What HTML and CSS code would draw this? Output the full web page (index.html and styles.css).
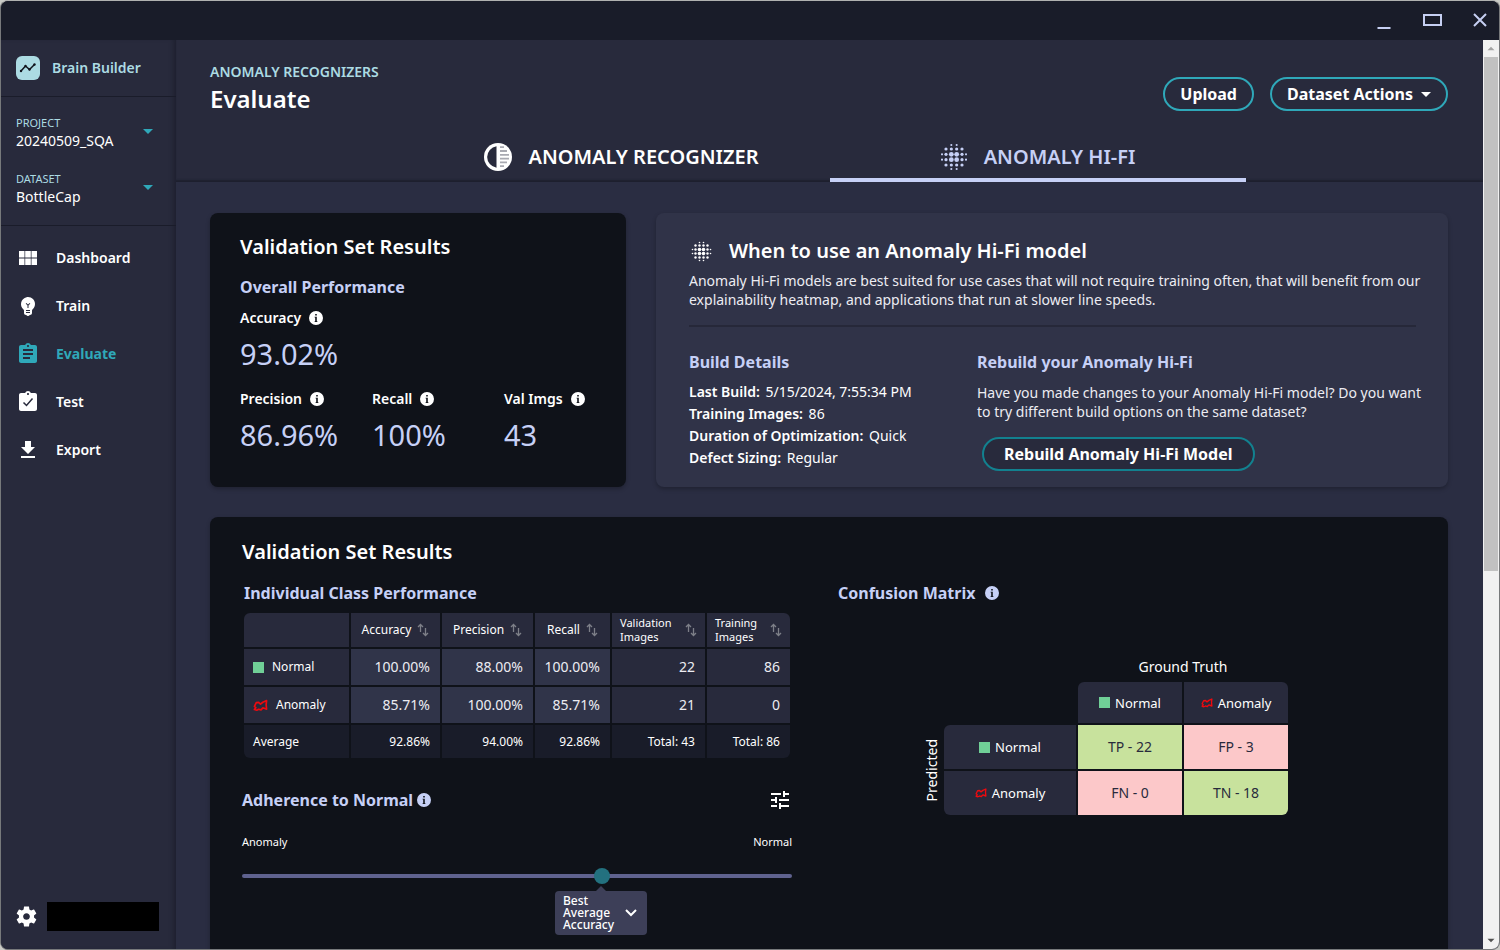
FILE: index.html
```html
<!DOCTYPE html>
<html lang="en">
<head>
  <meta charset="UTF-8" />
  <meta name="viewport" content="width=device-width, initial-scale=1" />
  <title>Brain Builder - Evaluate</title>
  <link rel="stylesheet" href="styles.css">
</head>
<body>
  <!-- Icon sprite -->
  <svg class="sprite" aria-hidden="true">
    <symbol id="i-blur" viewBox="1.5 1.5 21 21">
      <circle cx="10" cy="10" r="1.8"/><circle cx="14" cy="10" r="1.8"/><circle cx="10" cy="14" r="1.8"/><circle cx="14" cy="14" r="1.8"/>
      <circle cx="6" cy="6" r="1.2"/><circle cx="10" cy="6" r="1.2"/><circle cx="14" cy="6" r="1.2"/><circle cx="18" cy="6" r="1.2"/>
      <circle cx="6" cy="10" r="1.2"/><circle cx="18" cy="10" r="1.2"/><circle cx="6" cy="14" r="1.2"/><circle cx="18" cy="14" r="1.2"/>
      <circle cx="6" cy="18" r="1.2"/><circle cx="10" cy="18" r="1.2"/><circle cx="14" cy="18" r="1.2"/><circle cx="18" cy="18" r="1.2"/>
      <circle cx="10" cy="3" r=".8"/><circle cx="14" cy="3" r=".8"/><circle cx="10" cy="21" r=".8"/><circle cx="14" cy="21" r=".8"/>
      <circle cx="3" cy="10" r=".8"/><circle cx="3" cy="14" r=".8"/><circle cx="21" cy="10" r=".8"/><circle cx="21" cy="14" r=".8"/>
    </symbol>
    <symbol id="i-info" viewBox="0 0 14 14">
      <path fill-rule="evenodd" d="M7 0a7 7 0 1 0 0 14A7 7 0 0 0 7 0zM6.200 3h1.600v1.500H6.200zM5.600 5.700h2.200v4.500h.6v.8H5.600v-.8h.6V6.500h-.6z"/>
    </symbol>
    <symbol id="i-sort" viewBox="0 0 12 14">
      <path d="M3.500 9V1.500M1 4l2.500-2.500L6 4M8.500 5v7.500M6 10l2.500 2.500L11 10" fill="none" stroke="currentColor" stroke-width="1.300"/>
    </symbol>
    <symbol id="i-blob" viewBox="0 0 16 13">
      <path d="M1.500 7.500 3.500 3.500 6 3.200 8 5l2.500-2 4-1.800-.5 4.300.5 5-2.500-1-1.500-.5-2 2.200-2.500-.7-2 1-2.500-.7 1.500-2z" fill="none" stroke="currentColor" stroke-width="1.800" stroke-linejoin="round"/>
    </symbol>
    <symbol id="i-caret" viewBox="0 0 10 5"><path d="M0 0h10L5 5z"/></symbol>
  </svg>

  <div class="window">
    <div class="titlebar">
      <button aria-label="Minimize"><svg viewBox="0 0 24 24"><path d="M5.500 19h13"/></svg></button>
      <button aria-label="Maximize"><svg viewBox="0 0 24 24"><path d="M4 6h17v10H4z"/></svg></button>
      <button aria-label="Close"><svg viewBox="0 0 24 24"><path d="M6 5l12 12M18 5L6 17"/></svg></button>
    </div>

    <div class="app">
      <aside class="sidebar">
        <div class="brand">
          <svg class="logo" viewBox="0 0 24 24">
            <rect width="24" height="24" rx="6" fill="#acdbe3"/>
            <path d="M5 15l4.500-5 4 3.500L18.500 8.500" fill="none" stroke="#10131c" stroke-width="1.500"/>
            <g fill="#10131c"><circle cx="5" cy="15" r="1.200"/><circle cx="9.500" cy="10" r="1.200"/><circle cx="13.500" cy="13.500" r="1.200"/><circle cx="18.500" cy="8.500" r="1.200"/></g>
          </svg>
          <span>Brain Builder</span>
        </div>

        <div class="pickers">
          <div class="picker">
            <div>
              <label for="project">PROJECT</label>
              <select id="project"><option>20240509_SQA</option></select>
            </div>
            <svg class="caret"><use href="#i-caret"/></svg>
          </div>
          <div class="picker">
            <div>
              <label for="dataset">DATASET</label>
              <select id="dataset"><option>BottleCap</option></select>
            </div>
            <svg class="caret"><use href="#i-caret"/></svg>
          </div>
        </div>

        <nav class="menu">
          <a href="#">
            <svg viewBox="0 0 24 24"><path d="M3 5h5.500v6.500H3zM9.200 5h5.600v6.500H9.200zM15.500 5H21v6.500h-5.500zM3 12.500h5.500V19H3zM9.200 12.500h5.600V19H9.200zM15.500 12.500H21V19h-5.500z"/></svg>
            Dashboard
          </a>
          <a href="#">
            <svg viewBox="0 0 24 24"><path d="M12 3c-.46 0-.93.04-1.400.14-2.760.53-4.960 2.760-5.480 5.520-.48 2.610.48 5.010 2.220 6.560.43.38.66.91.66 1.470V19c0 1.100.9 2 2 2h.28c.35.6.98 1 1.720 1s1.380-.4 1.720-1H14c1.100 0 2-.9 2-2v-2.310c0-.55.22-1.090.64-1.460C18.090 13.950 19 12.080 19 10c0-3.870-3.130-7-7-7zm2 16h-4v-1h4v1zm0-2h-4v-1h4v1zm-1.500-5.590V14h-1v-2.590L9.670 9.590l.71-.71L12 10.500l1.620-1.620.71.71-1.830 1.820z"/></svg>
            Train
          </a>
          <a href="#" class="active">
            <svg viewBox="0 0 24 24"><path d="M19 3h-4.180C14.400 1.840 13.300 1 12 1c-1.300 0-2.400.84-2.820 2H5c-1.100 0-2 .9-2 2v14c0 1.100.9 2 2 2h14c1.100 0 2-.9 2-2V5c0-1.100-.9-2-2-2zm-7 0c.55 0 1 .45 1 1s-.45 1-1 1-1-.45-1-1 .45-1 1-1zm2 14H7v-2h7v2zm3-4H7v-2h10v2zm0-4H7V7h10v2z"/></svg>
            Evaluate
          </a>
          <a href="#">
            <svg viewBox="0 0 24 24"><path d="M19 3h-4.180C14.400 1.840 13.300 1 12 1c-1.300 0-2.400.84-2.820 2H5c-1.100 0-2 .9-2 2v14c0 1.100.9 2 2 2h14c1.100 0 2-.9 2-2V5c0-1.100-.9-2-2-2zm-7 0c.55 0 1 .45 1 1s-.45 1-1 1-1-.45-1-1 .45-1 1-1z"/><path d="M7.500 12.500l3 3 6-7" fill="none" stroke="#282a3c" stroke-width="1.500"/></svg>
            Test
          </a>
          <a href="#">
            <svg viewBox="0 0 24 24"><path d="M19 9h-4V3H9v6H5l7 7 7-7zM5 18v2h14v-2H5z"/></svg>
            Export
          </a>
        </nav>

        <div class="account">
          <button aria-label="Settings"><svg viewBox="2 2 20 20"><path d="M19.140 12.940c.04-.3.06-.61.06-.94 0-.32-.02-.64-.07-.94l2.030-1.580c.18-.14.23-.41.12-.61l-1.920-3.320c-.12-.22-.37-.29-.59-.22l-2.390.96c-.5-.38-1.030-.7-1.620-.94l-.36-2.540c-.04-.24-.24-.41-.48-.41h-3.840c-.24 0-.43.17-.47.41l-.36 2.540c-.59.24-1.130.57-1.620.94l-2.390-.96c-.22-.08-.47 0-.59.22L2.740 8.870c-.12.21-.08.47.12.61l2.030 1.580c-.05.3-.09.63-.09.94s.02.64.07.94l-2.030 1.580c-.18.14-.23.41-.12.61l1.920 3.320c.12.22.37.29.59.22l2.390-.96c.5.38 1.030.7 1.620.94l.36 2.540c.05.24.24.41.48.41h3.840c.24 0 .44-.17.47-.41l.36-2.540c.59-.24 1.130-.56 1.620-.94l2.390.96c.22.08.47 0 .59-.22l1.920-3.320c.12-.22.07-.47-.12-.61l-2.010-1.580zM12 15.200c-1.800 0-3.200-1.400-3.200-3.200s1.400-3.200 3.200-3.200 3.200 1.400 3.200 3.200-1.400 3.200-3.200 3.200z"/></svg></button>
          <div class="user"></div>
        </div>
      </aside>

      <main class="main">
        <header class="header">
          <div class="header-row">
            <div>
              <div class="overline">ANOMALY RECOGNIZERS</div>
              <h1>Evaluate</h1>
            </div>
            <div class="actions">
              <button class="pill">Upload</button>
              <button class="pill">Dataset Actions <svg class="caret"><use href="#i-caret"/></svg></button>
            </div>
          </div>
          <div class="tabs" role="tablist">
            <button class="tab" role="tab">
              <svg viewBox="0 0 28 28">
                <circle cx="14" cy="14" r="14"/>
                <path d="M12.500 3.300a10.800 10.800 0 0 0 0 21.400z" fill="#282a3c"/>
                <path d="M16 4.200h4M16 8h7M16 11.800h9M16 15.600h9M16 19.400h7M16 23.200h4" stroke="#a9aab2" stroke-width="1.800"/>
              </svg>
              ANOMALY RECOGNIZER
            </button>
            <button class="tab selected" role="tab" aria-selected="true">
              <svg><use href="#i-blur"/></svg>
              ANOMALY HI-FI
            </button>
          </div>
        </header>

        <div class="content">
          <section class="card summary">
            <h2>Validation Set Results</h2>
            <h3>Overall Performance</h3>
            <div class="stat">
              <div class="stat-label">Accuracy <svg class="info"><use href="#i-info"/></svg></div>
              <div class="stat-value">93.02%</div>
            </div>
            <div class="stat-row">
              <div class="stat">
                <div class="stat-label">Precision <svg class="info"><use href="#i-info"/></svg></div>
                <div class="stat-value">86.96%</div>
              </div>
              <div class="stat">
                <div class="stat-label">Recall <svg class="info"><use href="#i-info"/></svg></div>
                <div class="stat-value">100%</div>
              </div>
              <div class="stat">
                <div class="stat-label">Val Imgs <svg class="info"><use href="#i-info"/></svg></div>
                <div class="stat-value">43</div>
              </div>
            </div>
          </section>

          <section class="card about">
            <h2><svg><use href="#i-blur"/></svg>When to use an Anomaly Hi-Fi model</h2>
            <p>Anomaly Hi-Fi models are best suited for use cases that will not require training often, that will benefit from our explainability heatmap, and applications that run at slower line speeds.</p>
            <hr>
            <div class="about-cols">
              <div>
                <h3>Build Details</h3>
                <ul class="details">
                  <li><b>Last Build:</b> 5/15/2024, 7:55:34 PM</li>
                  <li><b>Training Images:</b> 86</li>
                  <li><b>Duration of Optimization:</b> Quick</li>
                  <li><b>Defect Sizing:</b> Regular</li>
                </ul>
              </div>
              <div>
                <h3>Rebuild your Anomaly Hi-Fi</h3>
                <p>Have you made changes to your Anomaly Hi-Fi model? Do you want to try different build options on the same dataset?</p>
                <button class="pill rebuild">Rebuild Anomaly Hi-Fi Model</button>
              </div>
            </div>
          </section>

          <section class="card results">
            <h2>Validation Set Results</h2>
            <div class="results-cols">
              <div class="classes">
                <h3>Individual Class Performance</h3>
                <table class="perf">
                  <colgroup><col class="c-name"><col class="c-acc"><col class="c-prec"><col class="c-rec"><col class="c-val"><col class="c-train"></colgroup>
                  <thead>
                    <tr>
                      <td></td>
                      <th><div class="sort">Accuracy <svg><use href="#i-sort"/></svg></div></th>
                      <th><div class="sort">Precision <svg><use href="#i-sort"/></svg></div></th>
                      <th><div class="sort">Recall <svg><use href="#i-sort"/></svg></div></th>
                      <th><div class="sort wide"><span>Validation<br>Images</span> <svg><use href="#i-sort"/></svg></div></th>
                      <th><div class="sort wide"><span>Training<br>Images</span> <svg><use href="#i-sort"/></svg></div></th>
                    </tr>
                  </thead>
                  <tbody>
                    <tr>
                      <th><div class="class-name"><i class="square"></i>Normal</div></th>
                      <td class="pct">100.00%</td><td class="pct">88.00%</td><td class="pct">100.00%</td><td>22</td><td>86</td>
                    </tr>
                    <tr>
                      <th><div class="class-name"><svg class="blob"><use href="#i-blob"/></svg>Anomaly</div></th>
                      <td class="pct">85.71%</td><td class="pct">100.00%</td><td class="pct">85.71%</td><td>21</td><td>0</td>
                    </tr>
                  </tbody>
                  <tfoot>
                    <tr><th>Average</th><td>92.86%</td><td>94.00%</td><td>92.86%</td><td>Total: 43</td><td>Total: 86</td></tr>
                  </tfoot>
                </table>

                <div class="adherence-head">
                  <h3><label for="adherence">Adherence to Normal</label> <svg class="info"><use href="#i-info"/></svg></h3>
                  <button aria-label="Adjust"><svg viewBox="0 0 24 24"><path d="M3 17v2h6v-2H3zM3 5v2h10V5H3zm10 16v-2h8v-2h-8v-2h-2v6h2zM7 9v2H3v2h4v2h2V9H7zm14 4v-2H11v2h10zm-6-4h2V7h4V5h-4V3h-2v6z"/></svg></button>
                </div>
                <div class="range-labels"><span>Anomaly</span><span>Normal</span></div>
                <div class="slider">
                  <input type="range" id="adherence" min="0" max="100" value="66">
                  <button class="marker">
                    <span>Best<br>Average<br>Accuracy</span>
                    <svg viewBox="0 0 12 8"><path d="M1 1l5 5 5-5"/></svg>
                  </button>
                </div>
              </div>

              <div>
                <h3>Confusion Matrix <svg class="info"><use href="#i-info"/></svg></h3>
                <table class="matrix">
                  <colgroup><col class="m-side"><col class="m-name"><col class="m-cell"><col class="m-cell"></colgroup>
                  <tr>
                    <td></td><td></td>
                    <th class="axis" colspan="2">Ground Truth</th>
                  </tr>
                  <tr>
                    <td></td><td></td>
                    <th class="head tl"><div class="class-name"><i class="square"></i>Normal</div></th>
                    <th class="head tr"><div class="class-name"><svg class="blob"><use href="#i-blob"/></svg>Anomaly</div></th>
                  </tr>
                  <tr>
                    <th class="axis side" rowspan="2"><span>Predicted</span></th>
                    <th class="head tl"><div class="class-name"><i class="square"></i>Normal</div></th>
                    <td class="good">TP - 22</td>
                    <td class="bad">FP - 3</td>
                  </tr>
                  <tr>
                    <th class="head bl"><div class="class-name"><svg class="blob"><use href="#i-blob"/></svg>Anomaly</div></th>
                    <td class="bad">FN - 0</td>
                    <td class="good br">TN - 18</td>
                  </tr>
                </table>
              </div>
            </div>
          </section>
        </div>
      </main>

      <div class="scrollbar" aria-hidden="true">
        <svg viewBox="0 0 16 16"><path d="M4 10h8L8 6z"/></svg>
        <div class="thumb"></div>
        <svg class="down" viewBox="0 0 16 16"><path d="M4 6h8l-4 4z"/></svg>
      </div>
    </div>
  </div>
</body>
</html>
```
FILE: styles.css
```css
* {
  box-sizing: border-box;
}

body {
  margin: 0;
  background: #c9cac6;
  color: #fff;
  font-family: 'Noto Sans', 'Open Sans', sans-serif;
  font-size: 14px;
  line-height: 20px;
}

h1, h2, h3, p, ul, table {
  margin: 0;
  padding: 0;
}

button {
  background: none;
  border: 0;
  padding: 0;
  color: inherit;
  font: inherit;
  cursor: pointer;
}

svg {
  display: block;
  flex: none;
  fill: currentColor;
}

.sprite {
  position: absolute;
  width: 0;
  height: 0;
}

/* Window frame */
.window {
  display: flex;
  flex-direction: column;
  height: 100vh;
  overflow: hidden;
  border: 1px solid #77797b;
  border-top-color: #b0b1b0;
  border-radius: 8px;
  background: #282a3c;
}

.titlebar {
  display: flex;
  flex: none;
  align-items: center;
  justify-content: flex-end;
  gap: 24px;
  height: 39px;
  padding-right: 7px;
  background: #191c29;
  color: #c6cff2;
}
.titlebar svg {
  width: 24px;
  height: 24px;
  fill: none;
  stroke: currentColor;
  stroke-width: 2;
}

.app {
  display: flex;
  flex: 1;
  min-height: 0;
}

/* Sidebar */
.sidebar {
  display: flex;
  flex: none;
  flex-direction: column;
  width: 175px;
  background: #282a3c;
  box-shadow: inset -5px 0 5px -3px #1d1f2e;
}

.brand {
  display: flex;
  align-items: center;
  gap: 12px;
  height: 57px;
  padding-left: 15px;
  border-bottom: 1px solid #1a1c2a;
  color: #acdbe3;
  font-weight: 600;
}
.logo {
  width: 24px;
  height: 24px;
}

.pickers {
  display: flex;
  flex-direction: column;
  gap: 20px;
  padding: 18px 23px 18px 15px;
  border-bottom: 1px solid #1a1c2a;
}
.picker {
  display: flex;
  align-items: flex-start;
  justify-content: space-between;
  color: #2fa8b9;
}
.picker label {
  display: block;
  color: #acdbe3;
  font-size: 11px;
  line-height: 16px;
}
.picker select {
  display: block;
  height: 20px;
  padding: 0;
  appearance: none;
  background: none;
  border: 0;
  color: #fff;
  font: inherit;
}
.caret {
  width: 10px;
  height: 5px;
}
.picker .caret {
  margin-top: 14px;
}

.menu {
  flex: 1;
  padding-top: 8px;
}
.menu a {
  display: flex;
  align-items: center;
  gap: 16px;
  height: 48px;
  padding-left: 15px;
  color: #fff;
  font-weight: 600;
  text-decoration: none;
}
.menu a.active {
  color: #2fa8b9;
  font-weight: 700;
}
.menu svg {
  width: 24px;
  height: 24px;
}

.account {
  display: flex;
  align-items: center;
  gap: 10px;
  padding: 0 17px 18px 15px;
}
.account svg {
  width: 21px;
  height: 21px;
}
.user {
  flex: 1;
  height: 29px;
  background: #000;
}

/* Page header */
.main {
  flex: 1;
  min-width: 0;
  overflow: hidden;
  background: #2a2d42;
}

.header {
  background: #282a3c;
  box-shadow: inset 0 -3px 2px -1px #1d1f2e;
}
.header-row {
  display: flex;
  align-items: flex-start;
  justify-content: space-between;
  padding: 22px 35px 20px 34px;
}
.overline {
  color: #acdbe3;
  font-weight: 600;
}
h1 {
  font-size: 24px;
  font-weight: 600;
  line-height: 34px;
}

.actions {
  display: flex;
  gap: 16px;
  padding-top: 15px;
}
.pill {
  display: flex;
  align-items: center;
  gap: 8px;
  height: 34px;
  padding: 0 15px;
  border: 2px solid #2fa8b9;
  border-radius: 17px;
  font-size: 16px;
  font-weight: 700;
}

.tabs {
  display: flex;
  justify-content: center;
}
.tab {
  display: flex;
  align-items: center;
  justify-content: center;
  gap: 16px;
  width: 416px;
  height: 46px;
  border-bottom: 4px solid transparent;
  font-size: 20px;
  font-weight: 600;
}
.tab svg {
  width: 28px;
  height: 28px;
}
.tab.selected {
  border-color: #c6d0f6;
  color: #c6d0f6;
}

/* Cards */
.content {
  display: grid;
  grid-template-columns: 416px 1fr;
  gap: 30px;
  padding: 31px 35px 31px 34px;
}
.card {
  border-radius: 8px;
  background: #0f1219;
  box-shadow: 0 2px 4px rgba(0, 0, 0, 0.25);
}

h2 {
  font-size: 20px;
  font-weight: 600;
  line-height: 28px;
}
h3 {
  display: flex;
  align-items: center;
  gap: 10px;
  color: #c6d0f6;
  font-size: 16px;
  font-weight: 700;
  line-height: 24px;
}
.info {
  width: 14px;
  height: 14px;
}

.summary {
  padding: 20px 30px 31px;
}
.summary h3 {
  margin: 14px 0 9px;
}
.stat-row {
  display: grid;
  grid-template-columns: 132px 132px 1fr;
  margin-top: 16px;
}
.stat-label {
  display: flex;
  align-items: center;
  gap: 8px;
  font-weight: 600;
}
.stat-value {
  margin-top: 7px;
  color: #c6d0f6;
  font-size: 29px;
  line-height: 38px;
}

.about {
  padding: 24px 32px 16px 33px;
  background: #303348;
}
.about h2 {
  display: flex;
  align-items: center;
  gap: 17px;
  padding-left: 2px;
}
.about h2 svg {
  width: 21px;
  height: 21px;
}
.about p {
  margin-right: -12px;
  color: #ececf2;
  line-height: 19px;
}
.about h2 + p {
  margin-top: 6px;
}
.about hr {
  height: 2px;
  margin: 16px 0 23px;
  border: 0;
  background: #262839;
}
.about-cols {
  display: grid;
  grid-template-columns: 288px 1fr;
}
.about-cols p {
  margin-top: 9px;
}
.details {
  margin-top: 7px;
  list-style: none;
  line-height: 22px;
}
.details b {
  margin-right: 2px;
  font-weight: 600;
}
.rebuild {
  margin: 16px 0 0 5px;
  padding: 0 20px;
  border-color: #12818f;
  background: #282a3c;
}

/* Results */
.results {
  grid-column: 1 / -1;
  padding: 21px 32px 80px;
}
.results-cols {
  display: grid;
  grid-template-columns: 550px 1fr;
  gap: 46px;
  margin-top: 15px;
}
.classes > h3 {
  padding-left: 2px;
}

.perf, .matrix {
  table-layout: fixed;
  border-spacing: 2px;
}
.perf td, .perf th, .matrix td, .matrix th {
  padding: 0;
  font-weight: 400;
}

.perf {
  width: 100%;
  margin-top: 6px;
}
.c-name { width: 105px; }
.c-acc { width: 89px; }
.c-prec { width: 91px; }
.c-rec { width: 75px; }
.c-val { width: 93px; }
.c-train { width: 83px; }

.perf td, .perf th {
  background: #282a3c;
}
.perf thead tr { height: 34px; }
.perf tbody tr { height: 36px; }
.perf tfoot tr { height: 33px; }
.perf thead th {
  font-size: 12px;
}
.sort {
  display: flex;
  align-items: center;
  justify-content: center;
  gap: 6px;
}
.sort svg {
  width: 12px;
  height: 14px;
  color: #7d7f88;
}
.sort.wide {
  justify-content: space-between;
  padding: 0 8px;
  font-size: 11px;
  line-height: 14px;
  text-align: left;
}
.perf tbody td {
  color: #ececf2;
  padding-right: 10px;
  text-align: right;
}
.perf tbody .pct {
  background: #303449;
}
.perf tbody th {
  padding-left: 9px;
  font-size: 12px;
}
.perf tfoot td, .perf tfoot th {
  padding: 0 10px 0 9px;
  background: #191c29;
  font-size: 12px;
  text-align: right;
}
.perf tfoot th {
  text-align: left;
}
.perf thead tr > :first-child { border-top-left-radius: 6px; }
.perf thead tr > :last-child { border-top-right-radius: 6px; }
.perf tfoot tr > :first-child { border-bottom-left-radius: 6px; }
.perf tfoot tr > :last-child { border-bottom-right-radius: 6px; }

.class-name {
  display: flex;
  align-items: center;
  gap: 8px;
}
.square {
  width: 11px;
  height: 11px;
  background: #70cf97;
}
.blob {
  width: 15px;
  height: 13px;
  color: #ee0a0f;
}

.adherence-head {
  display: flex;
  align-items: center;
  justify-content: space-between;
  margin-top: 28px;
}
.adherence-head h3 {
  gap: 4px;
}
.adherence-head button svg {
  width: 24px;
  height: 24px;
}
.range-labels {
  display: flex;
  justify-content: space-between;
  margin-top: 22px;
  font-size: 11px;
  line-height: 16px;
}

.slider {
  position: relative;
  margin-top: 18px;
}
.slider input {
  display: block;
  width: 100%;
  height: 16px;
  margin: 0;
  appearance: none;
  background: none;
}
.slider input::-webkit-slider-runnable-track {
  height: 4px;
  border-radius: 2px;
  background: #5f628f;
}
.slider input::-webkit-slider-thumb {
  width: 16px;
  height: 16px;
  margin-top: -6px;
  appearance: none;
  border-radius: 50%;
  background: #23717f;
}
.marker {
  display: flex;
  position: absolute;
  top: 23px;
  left: calc(66% - 4px);
  align-items: center;
  justify-content: space-between;
  width: 92px;
  height: 44px;
  padding: 0 10px 0 8px;
  transform: translateX(-50%);
  border-radius: 4px;
  background: #3d3f58;
  font-size: 12px;
  font-weight: 500;
  line-height: 12px;
  text-align: left;
}
.marker::before {
  content: '';
  position: absolute;
  top: -5px;
  left: 41px;
  border: 5px solid transparent;
  border-top: 0;
  border-bottom-color: #3d3f58;
}
.marker svg {
  width: 12px;
  height: 8px;
  fill: none;
  stroke: #fff;
  stroke-width: 2;
}

/* Confusion matrix */
.matrix {
  width: 370px;
  margin: 47px 0 0 82px;
  text-align: center;
}
.m-side { width: 20px; }
.m-name { width: 132px; }
.m-cell { width: 104px; }

.matrix tr { height: 44px; }
.matrix tr:nth-child(1) { height: 26px; }
.matrix tr:nth-child(2) { height: 41px; }
.matrix .head {
  background: #282a3c;
  font-size: 13px;
}
.matrix .class-name {
  justify-content: center;
  gap: 5px;
}
.matrix .blob {
  width: 12px;
  height: 10px;
}
.matrix .side span {
  display: block;
  writing-mode: vertical-rl;
  transform: rotate(180deg);
}
.matrix .good, .matrix .bad {
  color: #282a3c;
}
.matrix .good { background: #c8e29d; }
.matrix .bad { background: #fcc8c9; }
.matrix .tl { border-top-left-radius: 6px; }
.matrix .tr { border-top-right-radius: 6px; }
.matrix .bl { border-bottom-left-radius: 6px; }
.matrix .br { border-bottom-right-radius: 6px; }

/* Scrollbar */
.scrollbar {
  display: flex;
  flex: none;
  flex-direction: column;
  width: 16px;
  padding: 0 1px;
  background: #f1f1f1;
  color: #a3a3a3;
}
.scrollbar svg {
  width: 14px;
  height: 17px;
}
.scrollbar .down {
  color: #505050;
}
.scrollbar .thumb {
  height: 514px;
  margin-bottom: auto;
  background: #c1c1c1;
}
```
